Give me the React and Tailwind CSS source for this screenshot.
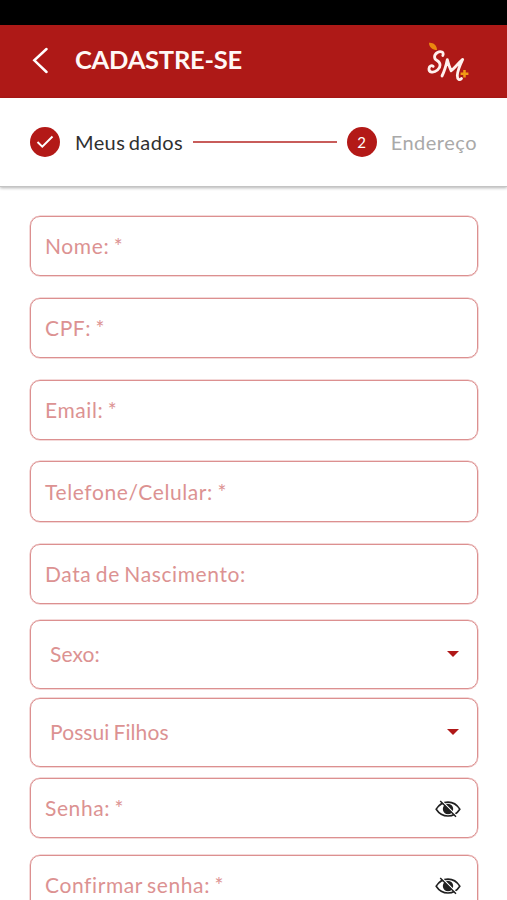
import React from 'react';

const fields = [
  { id: 'nome', label: 'Nome: *', className: 'h-[60px] mb-[22px]' },
  { id: 'cpf', label: 'CPF: *', className: 'h-[60px] mb-[22px]' },
  { id: 'email', label: 'Email: *', className: 'h-[60px] mb-[21px]' },
  { id: 'telefone', label: 'Telefone/Celular: *', className: 'h-[61px] mb-[22px] pt-px' },
  { id: 'nascimento', label: 'Data de Nascimento:', className: 'h-[60px] mb-4' },
  { id: 'sexo', label: 'Sexo:', type: 'select', className: 'h-[69px] mb-[9px]' },
  { id: 'filhos', label: 'Possui Filhos', type: 'select', className: 'h-[69px] mb-[11px]' },
  { id: 'senha', label: 'Senha: *', type: 'password', className: 'h-[60px] mb-[17px]' },
  { id: 'confirmar', label: 'Confirmar senha: *', type: 'password', className: 'h-[60px]' },
];

function Logo() {
  return (
    <svg className="mt-[3px] w-[75px] h-[60px]" viewBox="0 0 75 60" fill="none" strokeLinecap="round" strokeLinejoin="round">
      <path d="M19 10.7C23 10.2 27 13 27 18C22.5 18 19 15.3 19 10.7Z" fill="#ea870f" />
      <path
        d="M32.8 23.5C34.5 20 30.5 18.8 27.5 20.5C23.5 22.8 23.8 26.7 27 28.5C31 30.7 31 35 27.5 38C23.5 41.5 18.5 40.5 19 36.3C19.3 34 21.5 33 23.2 34.3"
        stroke="#fff1ee"
        strokeWidth="2.8"
      />
      <path
        d="M32 44C34.5 39 36.2 33 37.3 27.6C38.2 31.5 39.7 35.5 41.2 38.8C44.5 36 48.5 31 52.7 27.4C50 33 47.5 39 47.3 43.5C47.3 47.5 49.5 48.7 51.5 46.5"
        stroke="#fff1ee"
        strokeWidth="2.8"
      />
      <path d="M54.5 38V45.6M50.6 41.8H58.4" stroke="#f29a15" strokeWidth="2.5" strokeLinecap="butt" />
    </svg>
  );
}

function EyeOff() {
  return (
    <svg className="w-[26px] h-[18px]" viewBox="0 0 26 18" fill="none" stroke="#202020">
      <path d="M1.2 9.2C7 -0.2 19 -0.2 24.8 9.2C19 18.2 7 18.2 1.2 9.2Z" strokeWidth="1.6" />
      <circle cx="13" cy="9" r="5.2" fill="#202020" stroke="none" />
      <path d="M6.6 0.8L22 16.2" stroke="#fff" strokeWidth="1.4" />
      <path d="M5.2 1L21 16.8" strokeWidth="1.5" />
    </svg>
  );
}

function Field({ label, type, className }) {
  const isSelect = type === 'select';
  return (
    <div
      className={`flex shrink-0 items-center justify-between rounded-[10px] border border-[#dc9090] shadow-[0_0_0_0.5px_#e9b4b4] text-[21px] leading-6 [word-spacing:-1.5px] text-[#dc9292] ${
        isSelect ? 'pl-[19px] pr-[18px]' : 'pl-[14px] pr-4 pb-px'
      } ${className}`}
    >
      <span className={isSelect ? 'tracking-[0.1px] pb-0.5' : 'tracking-[0.6px]'}>{label}</span>
      {isSelect && (
        <svg className="w-3 h-1.5 mb-0.5" viewBox="0 0 12 6">
          <path d="M0 0H12L6 6Z" fill="#b01818" />
        </svg>
      )}
      {type === 'password' && (
        <span className="pt-0.5">
          <EyeOff />
        </span>
      )}
    </div>
  );
}

export default function CadastroScreen() {
  return (
    <div className="flex h-[900px] w-full flex-col overflow-hidden bg-white font-['Lato',sans-serif]">
      {/* Status bar */}
      <div className="h-[25px] shrink-0 bg-black" />

      {/* Header */}
      <header className="flex h-[73px] shrink-0 items-center bg-[#ae1917] pl-8 pr-[22px] pb-[3px]">
        <button className="mr-[27px]">
          <svg className="w-4 h-[27px]" viewBox="0 0 16 27" fill="none" stroke="#fff" strokeWidth="2.5" strokeLinecap="round">
            <path d="M14.5 2L2.3 13.3L14.5 25" />
          </svg>
        </button>
        <h1 className="flex-1 text-[25.5px] font-bold leading-none tracking-[-0.25px] text-[#fff8f6]">CADASTRE-SE</h1>
        <Logo />
      </header>

      {/* Steps */}
      <div className="flex h-[89px] shrink-0 items-center border-b border-[#c4c4c4] px-[30px] text-xl leading-6 shadow-[0_1px_3px_rgba(0,0,0,0.3)]">
        <span className="flex size-[30px] items-center justify-center rounded-full bg-[#b31917]">
          <svg className="w-[18px] h-[14px]" viewBox="0 0 18 14" fill="none" stroke="#fff" strokeWidth="2">
            <path d="M1.5 7L6.3 11.6L16.5 1.5" />
          </svg>
        </span>
        <span className="ml-[15px] tracking-[0.4px] [word-spacing:-2px] text-[#303030]">Meus dados</span>
        <span className="mx-[10px] h-0.5 flex-1 bg-[#c85c5a]" />
        <span className="flex size-[30px] items-center justify-center rounded-full bg-[#b31917] text-[15px] text-white">2</span>
        <span className="ml-[14px] tracking-[0.5px] text-[#a9a9a9]">Endereço</span>
      </div>

      {/* Form */}
      <form className="flex flex-col pl-[30px] pr-[29px] pt-[29px]">
        {fields.map((field) => (
          <Field key={field.id} label={field.label} type={field.type} className={field.className} />
        ))}
      </form>
    </div>
  );
}
